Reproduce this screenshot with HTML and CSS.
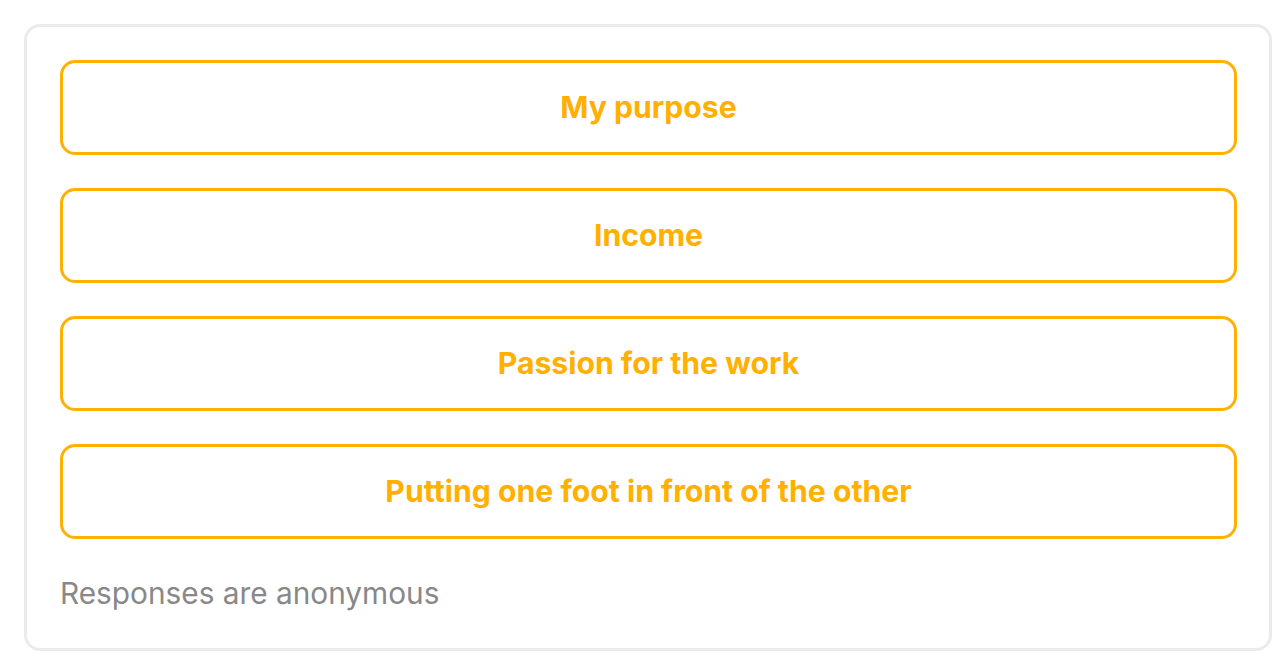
FILE: index.html
```html
<!DOCTYPE html>
<html>
<head>
<meta charset="utf-8">
<link rel="stylesheet" href="styles.css">
</head>
<body>
<div class="card">
  <div class="options">
    <button class="option">My purpose</button>
    <button class="option">Income</button>
    <button class="option">Passion for the work</button>
    <button class="option">Putting one foot in front of the other</button>
  </div>
  <p class="note">Responses are anonymous</p>
</div>
</body>
</html>
```

FILE: styles.css
```css
html, body {
  margin: 0;
  padding: 0;
  background: #ffffff;
}
body {
  padding: 24px 0 0 24px;
  font-family: Inter, "Noto Sans", sans-serif;
}
.card {
  box-sizing: border-box;
  width: 1248px;
  height: 627px;
  border: 3px solid #ebebeb;
  border-radius: 16px;
  padding: 33px 32px 0 33px;
  display: flex;
  flex-direction: column;
}
.options {
  display: flex;
  flex-direction: column;
  gap: 33px;
}
.option {
  box-sizing: border-box;
  height: 95px;
  width: 100%;
  background: #ffffff;
  border: 3px solid #ffb000;
  border-radius: 15px;
  color: #ffb000;
  font-family: Inter, "Noto Sans", sans-serif;
  font-weight: 700;
  font-size: 30.2px;
  padding: 0 0 2px 0;
  cursor: pointer;
}
.note {
  margin: 36px 0 0 0;
  font-size: 29.8px;
  line-height: 36px;
  color: #888888;
  font-weight: 400;
}
```
